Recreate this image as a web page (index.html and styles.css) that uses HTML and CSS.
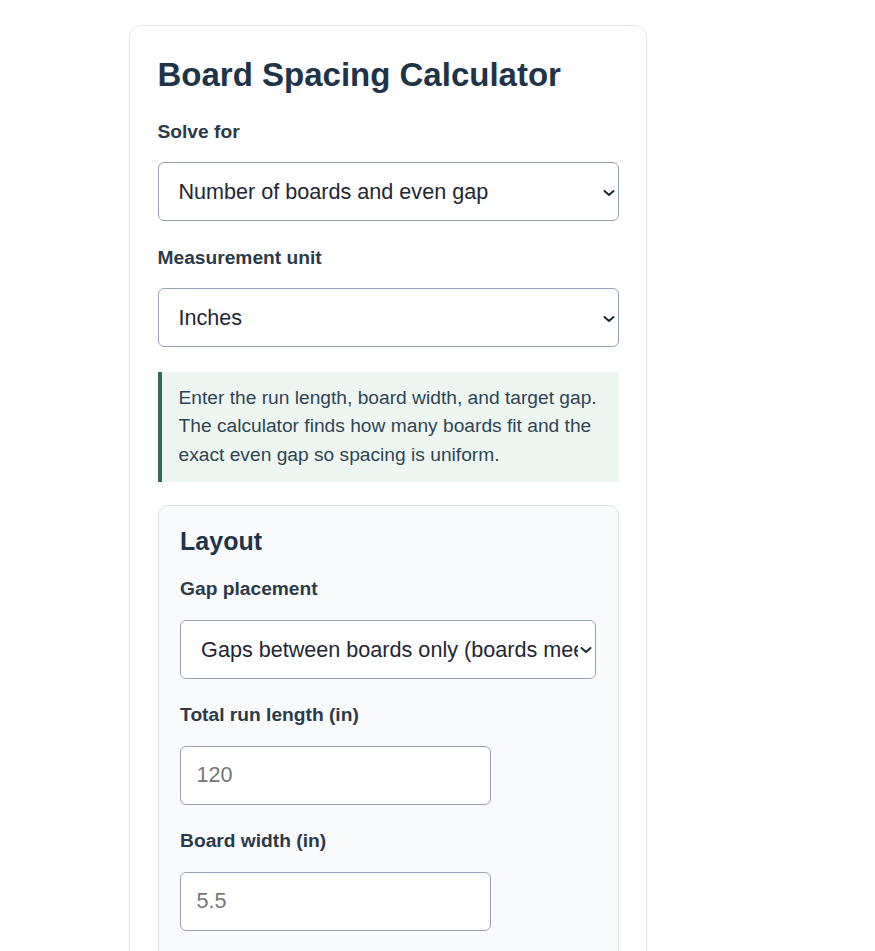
FILE: index.html
```
<!DOCTYPE html>
<html lang="en">
<head>
<meta charset="utf-8">
<title>Board Spacing Calculator</title>
<link rel="stylesheet" href="styles.css">
</head>
<body>
<main class="card">
  <h1 class="title">Board Spacing Calculator</h1>

  <div class="field">
    <label class="label" for="solve">Solve for</label>
    <div class="select-wrap">
      <select id="solve" class="select">
        <option>Number of boards and even gap</option>
        <option>Gap for a set number of boards</option>
      </select>
      <svg class="chevron" viewBox="0 0 15 24" aria-hidden="true"><path d="M3.5 10 L8 14 L12.5 10"/></svg>
    </div>
  </div>

  <div class="field">
    <label class="label" for="unit">Measurement unit</label>
    <div class="select-wrap">
      <select id="unit" class="select">
        <option>Inches</option>
        <option>Millimeters</option>
      </select>
      <svg class="chevron" viewBox="0 0 15 24" aria-hidden="true"><path d="M3.5 10 L8 14 L12.5 10"/></svg>
    </div>
  </div>

  <p class="info">Enter the run length, board width, and target gap. The calculator finds how many boards fit and the exact even gap so spacing is uniform.</p>

  <section class="panel">
    <h2 class="panel-title">Layout</h2>

    <div class="field">
      <label class="label" for="placement">Gap placement</label>
      <div class="select-wrap">
        <select id="placement" class="select">
          <option>Gaps between boards only (boards meet the ends)</option>
          <option>Gaps at both ends and between boards</option>
        </select>
        <svg class="chevron" viewBox="0 0 15 24" aria-hidden="true"><path d="M3.5 10 L8 14 L12.5 10"/></svg>
      </div>
    </div>

    <div class="field">
      <label class="label" for="run">Total run length (in)</label>
      <input id="run" class="input" type="number" placeholder="120">
    </div>

    <div class="field">
      <label class="label" for="board">Board width (in)</label>
      <input id="board" class="input" type="number" placeholder="5.5">
    </div>

    <div class="field">
      <label class="label" for="gap">Target gap (in)</label>
      <input id="gap" class="input" type="number" placeholder="0.25">
    </div>
  </section>
</main>
</body>
</html>
```

FILE: styles.css
```
* {
  box-sizing: border-box;
}

body {
  margin: 0;
  padding: 25px 0 40px 129px;
  background: #ffffff;
  font-family: "Liberation Sans", Arial, sans-serif;
}

.card {
  width: 518px;
  background: #ffffff;
  border: 1px solid #e2e8f0;
  border-radius: 12px;
  padding: 27.5px;
}

.title {
  margin: 0 0 25px;
  font-size: 33px;
  line-height: 41px;
  font-weight: 700;
  color: #1e3449;
}

.field {
  margin-bottom: 24.5px;
}

.label {
  display: block;
  font-size: 19.2px;
  line-height: 23px;
  font-weight: 700;
  color: #2b3a48;
  margin-bottom: 19.5px;
}

.select-wrap {
  position: relative;
}

.select {
  display: block;
  width: 100%;
  height: 59px;
  padding: 0 14px 0 20px;
  font-family: "Liberation Sans", Arial, sans-serif;
  font-size: 21.6px;
  color: #1f2733;
  background: #ffffff;
  border: 1px solid #94a3b8;
  border-radius: 6px;
  -webkit-appearance: none;
  appearance: none;
}

.chevron {
  position: absolute;
  right: 3px;
  top: 50%;
  width: 15px;
  height: 24px;
  margin-top: -11px;
  background: #ffffff;
  fill: none;
  stroke: #1f2937;
  stroke-width: 2;
  stroke-linecap: round;
  stroke-linejoin: round;
  pointer-events: none;
}

.input {
  display: block;
  width: 311px;
  height: 59px;
  padding: 0 15.5px;
  font-family: "Liberation Sans", Arial, sans-serif;
  font-size: 21.6px;
  color: #1f2733;
  background: #ffffff;
  border: 1px solid #94a3b8;
  border-radius: 6px;
}

.input::placeholder {
  color: #767676;
}

.info {
  margin: 0 0 23px;
  padding: 12px 16px 12px 17px;
  background: #eef6f2;
  border-left: 4.8px solid #2f6b57;
  font-size: 19.2px;
  line-height: 28.8px;
  color: #2f4552;
}

.panel {
  background: #f8fafc;
  border: 1px solid #dde3ea;
  border-radius: 10px;
  padding: 21.6px;
}

.panel-title {
  margin: 0 0 20.6px;
  font-size: 25px;
  line-height: 29px;
  font-weight: 700;
  color: #1e3449;
}
```
